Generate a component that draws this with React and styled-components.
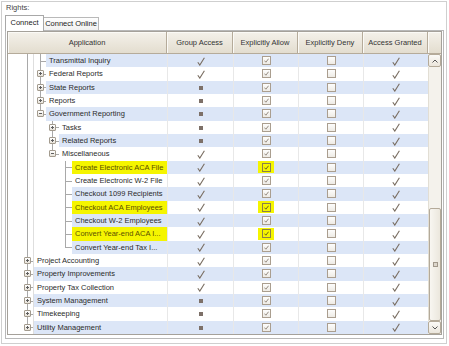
import styled, { createGlobalStyle } from "styled-components";

const ROW_H = "calc(40px / 3)";
const STRIPE = "#dce6f7";
const HILITE = "#f5f500";
const LINE = "#a9a9a9";

const GlobalStyle = createGlobalStyle`
  * { box-sizing: border-box; }
  html, body { margin: 0; padding: 0; background: #fff; }
  body {
    font-family: "Liberation Sans", Arial, sans-serif;
    font-size: 7.5px;
    color: #2b2b2b;
  }
`;

const Frame = styled.div`
  margin: 1px;
  width: 446px;
  height: 343px;
  border: 1px solid #cfcfcf;
  padding: 1px 2px 4px 3px;
  display: flex;
  flex-direction: column;
`;

const Caption = styled.div`
  height: 10px;
  line-height: 10px;
  padding-left: 1px;
  margin-bottom: 2px;
  color: #444;
`;

const Tabs = styled.div`
  display: flex;
  align-items: flex-end;
  height: 15px;
`;

const Tab = styled.div`
  position: relative;
  z-index: ${(p) => (p.$active ? 1 : 0)};
  width: ${(p) => p.$w}px;
  height: ${(p) => (p.$active ? 16 : 13)}px;
  margin-bottom: ${(p) => (p.$active ? -1 : 0)}px;
  margin-left: ${(p) => (p.$active ? 0 : -1)}px;
  border: 1px solid ${(p) => (p.$active ? "#a8a8a8" : "#b9b9b9")};
  border-bottom: none;
  background: ${(p) =>
    p.$active ? "#fff" : "linear-gradient(#fefefe, #f1f1f1)"};
  text-align: center;
  line-height: ${(p) => (p.$active ? 14 : 11)}px;
  color: #222;
  white-space: nowrap;
`;

const Panel = styled.div`
  flex: 1;
  border: 1px solid #b8b8b8;
  padding: 0 1px 3px 1px;
`;

const Grid = styled.div`
  border: 1px solid #a5a19a;
  display: flex;
  flex-direction: column;
`;

const Header = styled.div`
  display: grid;
  grid-template-columns: 159px 66px 65px 65px 65px 13px;
  height: 22px;
  border-bottom: 1px solid #b5ab9a;
`;

const HeadCell = styled.div`
  display: flex;
  align-items: center;
  justify-content: center;
  border-right: ${(p) => (p.$last ? "none" : "1px solid #b5ab9a")};
  background: linear-gradient(#f4f1ea, #e3ddcf);
  box-shadow: inset 1px 1px 0 #fbfaf6;
  color: #333;
  white-space: nowrap;
`;

const Body = styled.div`
  display: flex;
  height: 280px;
`;

const Rows = styled.div`
  width: 420px;
  display: flex;
  flex-direction: column;
`;

const Row = styled.div`
  display: grid;
  grid-template-columns: 159px 66px 65px 65px 65px;
  height: ${ROW_H};
  background: ${(p) => (p.$alt ? STRIPE : "#fff")};
`;

const AppCell = styled.div`
  display: flex;
  background: #fff;
  height: 100%;
`;

const Spacer = styled.span`
  flex: 0 0 13px;
`;

const Slot = styled.span`
  position: relative;
  flex: 0 0 ${(p) => p.$w}px;
  display: flex;
  align-items: center;
  height: 100%;
  border-right: ${(p) => (p.$edge ? "1px solid #dedede" : "none")};

  &::before {
    content: "";
    position: absolute;
    left: 6px;
    top: 0;
    width: 1px;
    height: ${(p) =>
      p.$v === "full" ? "100%" : p.$v === "top" ? "50%" : "0"};
    background: ${LINE};
  }

  &::after {
    content: "";
    position: absolute;
    left: 6px;
    right: 0;
    top: 50%;
    height: 1px;
    background: ${(p) => (p.$h ? LINE : "transparent")};
  }
`;

const Expander = styled.span`
  position: relative;
  z-index: 1;
  margin-left: 3px;
  width: 7px;
  height: 7px;
  border: 1px solid #a39b8e;
  border-radius: 1px;
  background: linear-gradient(#fff, #e6e1d8);

  &::before {
    content: "";
    position: absolute;
    left: 1px;
    top: 2px;
    width: 3px;
    height: 1px;
    background: #5e5e5e;
  }

  &::after {
    content: "";
    position: absolute;
    left: 2px;
    top: 1px;
    width: 1px;
    height: 3px;
    background: ${(p) => (p.$open ? "transparent" : "#5e5e5e")};
  }
`;

const Label = styled.span`
  flex: 1;
  min-width: 0;
  height: 100%;
  padding-left: 3px;
  line-height: ${ROW_H};
  white-space: nowrap;
  overflow: hidden;
  background: ${(p) => (p.$hl ? HILITE : p.$alt ? STRIPE : "#fff")};
  color: ${(p) => (p.$hl ? "#5b5000" : "#2b2b2b")};
`;

const Cell = styled.div`
  display: flex;
  align-items: center;
  justify-content: center;
  border-left: 1px solid #e8e8e8;
  height: 100%;
`;

const TickSvg = styled.svg`
  margin-top: 1px;
  display: block;
`;

const Mark = styled.span`
  width: 4px;
  height: 4px;
  margin-top: 1px;
  background: #7d7068;
`;

const BoxWrap = styled.span`
  display: flex;
  align-items: center;
  justify-content: center;
  width: 16px;
  height: 12px;
  background: ${(p) => (p.$hl ? HILITE : "transparent")};
`;

const Box = styled.span`
  display: flex;
  align-items: center;
  justify-content: center;
  width: 9px;
  height: 9px;
  border: 1px solid ${(p) => (p.$hl ? "#8a7f4c" : "#aa9e8f")};
  background: ${(p) =>
    p.$hl ? "transparent" : "linear-gradient(#fdfdfc, #eeebe5)"};
`;

const ScrollBar = styled.div`
  width: 13px;
  display: flex;
  flex-direction: column;
  background: #f4f2ec;
`;

const ScrollBtn = styled.div`
  height: 13px;
  display: flex;
  align-items: center;
  justify-content: center;
  border: 1px solid #b4aa99;
  border-radius: 2px;
  background: linear-gradient(#fbfaf7, #ebe6dc);
`;

const Track = styled.div`
  flex: 1;
  display: flex;
  flex-direction: column;
  justify-content: flex-end;
  border-left: 1px solid #e2ded4;
`;

const Thumb = styled.div`
  height: 113px;
  display: flex;
  align-items: center;
  justify-content: center;
  border: 1px solid #b4aa99;
  border-radius: 2px;
  background: linear-gradient(90deg, #f8f6f1, #ebe7dd);
`;

const Grip = styled.span`
  width: 5px;
  height: 5px;
  border: 1px solid #a0978a;
  background: #dcd6cb;
`;

const Tick = () => (
  <TickSvg width="8" height="9" viewBox="0 0 8 9">
    <path
      d="M0.8 5.2 L2.8 8.1 L7.4 0.8"
      fill="none"
      stroke="#7a6e62"
      strokeWidth="1.1"
    />
  </TickSvg>
);

const Check = ({ checked, hl }) => (
  <BoxWrap $hl={hl}>
    <Box $hl={hl}>
      {checked && (
        <svg width="5" height="5" viewBox="0 0 5 5" style={{ display: "block" }}>
          <path
            d="M0.4 2.6 L1.9 4.2 L4.6 0.7"
            fill="none"
            stroke={hl ? "#5c5222" : "#8b8075"}
            strokeWidth="0.9"
          />
        </svg>
      )}
    </Box>
  </BoxWrap>
);

const Chevron = ({ up }) => (
  <svg width="6" height="4" viewBox="0 0 6 4" style={{ display: "block" }}>
    <path
      d={up ? "M0.5 3.5 L3 1 L5.5 3.5" : "M0.5 0.5 L3 3 L5.5 0.5"}
      fill="none"
      stroke="#555"
      strokeWidth="1"
    />
  </svg>
);

const SLOT_W = [13, 12, 13, 13];

const rows = [
  { name: "Transmittal Inquiry", guides: ["pipe"], node: "tee", group: "tick" },
  { name: "Federal Reports", guides: ["pipe"], node: "tee", exp: "+", group: "tick" },
  { name: "State Reports", guides: ["pipe"], node: "tee", exp: "+", group: "mark" },
  { name: "Reports", guides: ["pipe"], node: "tee", exp: "+", group: "mark" },
  { name: "Government Reporting", guides: ["pipe"], node: "end", exp: "-", group: "mark" },
  { name: "Tasks", guides: ["pipe", "none"], node: "tee", exp: "+", group: "mark" },
  { name: "Related Reports", guides: ["pipe", "none"], node: "tee", exp: "+", group: "mark" },
  { name: "Miscellaneous", guides: ["pipe", "none"], node: "end", exp: "-", group: "tick" },
  { name: "Create Electronic ACA File", guides: ["pipe", "none", "none"], node: "tee", group: "tick", hl: true },
  { name: "Create Electronic W-2 File", guides: ["pipe", "none", "none"], node: "tee", group: "tick" },
  { name: "Checkout 1099 Recipients", guides: ["pipe", "none", "none"], node: "tee", group: "tick" },
  { name: "Checkout ACA Employees", guides: ["pipe", "none", "none"], node: "tee", group: "tick", hl: true },
  { name: "Checkout W-2 Employees", guides: ["pipe", "none", "none"], node: "tee", group: "tick" },
  { name: "Convert Year-end ACA I...", guides: ["pipe", "none", "none"], node: "tee", group: "tick", hl: true },
  { name: "Convert Year-end Tax I...", guides: ["pipe", "none", "none"], node: "end", group: "tick" },
  { name: "Project Accounting", guides: [], node: "tee", exp: "+", group: "tick" },
  { name: "Property Improvements", guides: [], node: "tee", exp: "+", group: "tick" },
  { name: "Property Tax Collection", guides: [], node: "tee", exp: "+", group: "tick" },
  { name: "System Management", guides: [], node: "tee", exp: "+", group: "mark" },
  { name: "Timekeeping", guides: [], node: "tee", exp: "+", group: "mark" },
  { name: "Utility Management", guides: [], node: "end", exp: "+", group: "mark" },
];

export default function App() {
  return (
    <>
      <GlobalStyle />
      <Frame>
        <Caption>Rights:</Caption>
        <Tabs>
          <Tab $active $w={39}>Connect</Tab>
          <Tab $w={56}>Connect Online</Tab>
        </Tabs>
        <Panel>
          <Grid>
            <Header>
              <HeadCell>Application</HeadCell>
              <HeadCell>Group Access</HeadCell>
              <HeadCell>Explicitly Allow</HeadCell>
              <HeadCell>Explicitly Deny</HeadCell>
              <HeadCell>Access Granted</HeadCell>
              <HeadCell $last />
            </Header>
            <Body>
              <Rows>
                {rows.map((r, i) => {
                  const alt = i % 2 === 0;
                  const level = r.guides.length;
                  return (
                    <Row key={r.name} $alt={alt}>
                      <AppCell>
                        <Spacer />
                        {r.guides.map((g, k) => (
                          <Slot
                            key={k}
                            $w={SLOT_W[k]}
                            $edge={k === 0}
                            $v={g === "pipe" ? "full" : "none"}
                          />
                        ))}
                        <Slot
                          $w={SLOT_W[level]}
                          $edge={level === 0}
                          $v={r.node === "tee" ? "full" : "top"}
                          $h
                        >
                          {r.exp && <Expander $open={r.exp === "-"} />}
                        </Slot>
                        <Label $alt={alt} $hl={r.hl}>
                          {r.name}
                        </Label>
                      </AppCell>
                      <Cell>{r.group === "tick" ? <Tick /> : <Mark />}</Cell>
                      <Cell>
                        <Check checked hl={r.hl} />
                      </Cell>
                      <Cell>
                        <Check />
                      </Cell>
                      <Cell>
                        <Tick />
                      </Cell>
                    </Row>
                  );
                })}
              </Rows>
              <ScrollBar>
                <ScrollBtn>
                  <Chevron up />
                </ScrollBtn>
                <Track>
                  <Thumb>
                    <Grip />
                  </Thumb>
                </Track>
                <ScrollBtn>
                  <Chevron />
                </ScrollBtn>
              </ScrollBar>
            </Body>
          </Grid>
        </Panel>
      </Frame>
    </>
  );
}
